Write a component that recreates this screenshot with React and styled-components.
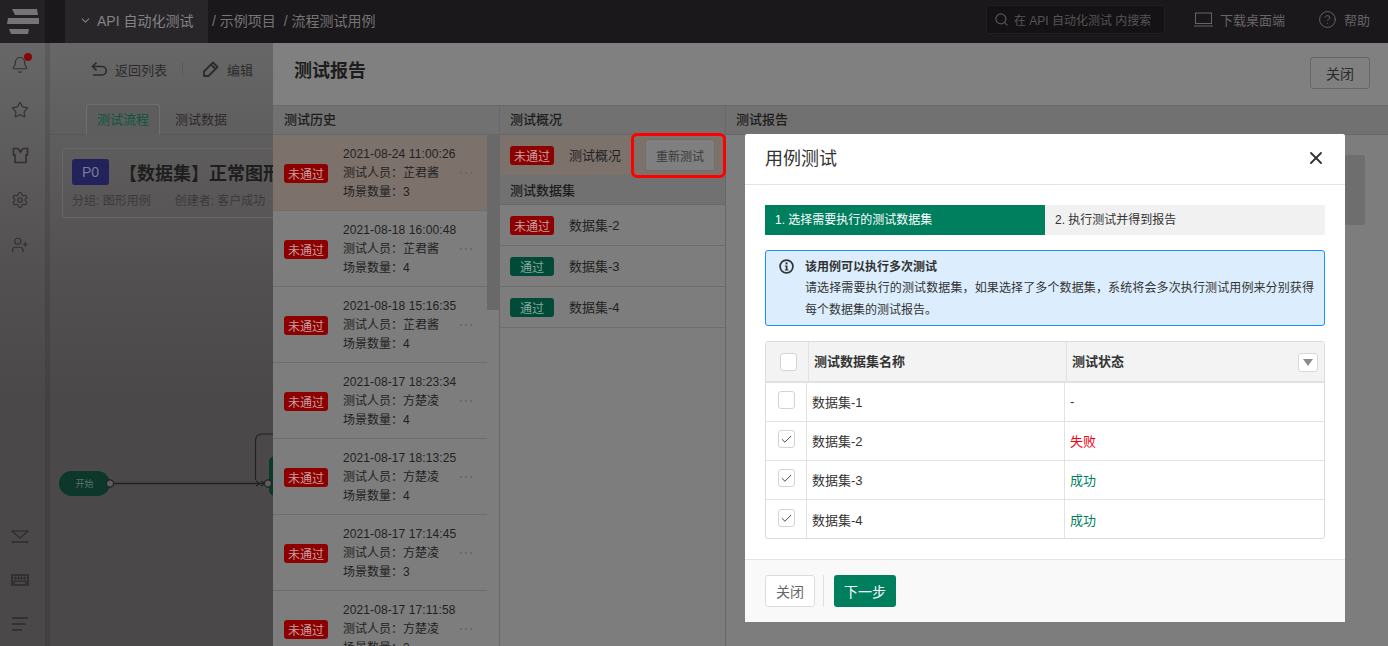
import React from "react";
import styled, { createGlobalStyle } from "styled-components";
import { Bell, Star, Settings, UserPlus, Search, CircleHelp, ChevronDown, Check, X } from "lucide-react";

const Global = createGlobalStyle`
  html, body { margin: 0; padding: 0; height: 100%; overflow: hidden; background: #4b4949; }
  #root { height: 100%; }
  * { box-sizing: border-box; }
  body { font-family: "Liberation Sans", "Noto Sans CJK SC", sans-serif; font-size: 12px; color: #262626; }
`;

const Page = styled.div`
  position: relative;
  width: 1388px;
  height: 646px;
  overflow: hidden;
  display: flex;
  flex-direction: column;
`;

/* ---------- top bar ---------- */
const TopBar = styled.header`
  height: 43px;
  flex: none;
  display: flex;
  align-items: stretch;
  background: #1a181a;
  color: #7e7c7e;
  font-size: 14px;
`;
const LogoCell = styled.div`
  width: 45px;
  display: flex;
  align-items: center;
  justify-content: center;
  background: #232123;
  margin-right: 20px;
`;
const Crumb = styled.div`
  width: 143px;
  display: flex;
  align-items: center;
  gap: 5px;
  padding-left: 14px;
  padding-bottom: 3px;
  background: #282628;
  color: #858385;
`;
const Path = styled.div`
  flex: 1;
  display: flex;
  align-items: center;
  gap: 8px;
  padding-left: 4px;
  padding-bottom: 3px;
  color: #767476;
`;
const SearchBox = styled.div`
  width: 179px;
  height: 29px;
  align-self: center;
  margin-top: -5px;
  display: flex;
  align-items: center;
  gap: 5px;
  padding-left: 7px;
  background: #141214;
  border: 1px solid #211f21;
  border-radius: 3px;
  color: #565456;
  font-size: 12px;
`;
const TopLink = styled.div`
  display: flex;
  align-items: center;
  gap: 7px;
  margin-left: ${(p) => p.$left}px;
  margin-right: ${(p) => p.$right || 0}px;
  margin-top: -4px;
  font-size: 13px;
  color: #666466;
`;

/* ---------- sidebar ---------- */
const Body = styled.div`
  flex: 1;
  display: flex;
  min-height: 0;
  background: linear-gradient(180deg, #686767 0, #525050 230px, #4a4848 360px);
`;
const SideBar = styled.aside`
  width: 50px;
  flex: none;
  display: flex;
  flex-direction: column;
  align-items: center;
  padding: 0 5px 0 0;
  border-right: 5px solid rgba(0, 0, 0, 0.1);
  color: #333131;
`;
const SideGroup = styled.div`
  display: flex;
  flex-direction: column;
  align-items: center;
  margin-top: ${(p) => p.$top}px;
  gap: ${(p) => p.$gap}px;
`;
const SideIcon = styled.div`
  position: relative;
  width: 22px;
  height: 22px;
  display: flex;
  align-items: center;
  justify-content: center;
`;
const Dot = styled.span`
  position: absolute;
  top: -1px;
  right: -1px;
  width: 8px;
  height: 8px;
  border-radius: 50%;
  background: #850808;
`;

/* ---------- main (dimmed, behind the drawer) ---------- */
const Main = styled.main`
  position: relative;
  flex: 1;
  min-width: 0;
  padding-top: 14px;
`;
const Toolbar = styled.div`
  height: 24px;
  padding-left: 41px;
  display: flex;
  align-items: center;
  color: #2c2b2b;
  font-size: 13px;
`;
const ToolItem = styled.span`
  display: flex;
  align-items: center;
  gap: 8px;
`;
const ToolDivider = styled.span`
  width: 1px;
  height: 14px;
  background: #5a5959;
  margin: 0 20px 0 15px;
`;
const Tabs = styled.div`
  height: 31px;
  margin-top: 23px;
  padding-left: 36px;
  display: flex;
  border-bottom: 1px solid #595757;
  font-size: 13px;
`;
const Tab = styled.div`
  width: ${(p) => (p.$active ? 74 : 82)}px;
  height: 31px;
  display: flex;
  align-items: center;
  justify-content: center;
  padding-bottom: 2px;
  color: ${(p) => (p.$active ? "#0d5540" : "#2b2a2a")};
  ${(p) => p.$active && "background: #5e5d5d; border: 1px solid #706e6e; border-bottom-color: #5e5d5d; border-radius: 3px 3px 0 0;"}
`;
const InfoCard = styled.div`
  margin: 13px 0 0 12px;
  width: 220px;
  height: 70px;
  padding: 10px 9px;
  border: 1px solid #686666;
  border-radius: 3px;
  white-space: nowrap;
  overflow: hidden;
`;
const TitleRow = styled.div`
  display: flex;
  align-items: center;
  gap: 10px;
`;
const Priority = styled.span`
  width: 37px;
  height: 26px;
  flex: none;
  display: flex;
  align-items: center;
  justify-content: center;
  background: #23225a;
  border-radius: 3px;
  color: #7b7a9c;
  font-size: 14px;
`;
const CaseTitle = styled.span`
  font-size: 18px;
  font-weight: 700;
  color: #1f1e1e;
`;
const Meta = styled.div`
  margin-top: 6px;
  display: flex;
  gap: 24px;
  color: #3b3a3a;
`;
const FlowCanvas = styled.div`
  position: absolute;
  inset: 0;
  pointer-events: none;
`;
const StartNode = styled.div`
  position: absolute;
  left: 9px;
  top: 428px;
  width: 51px;
  height: 25px;
  border-radius: 13px;
  display: flex;
  align-items: center;
  justify-content: center;
  background: #0c372a;
  color: #5a7369;
  font-size: 9px;
`;
const StepNode = styled.div`
  position: absolute;
  left: 219px;
  top: 413px;
  width: 30px;
  height: 40px;
  border-radius: 6px;
  background: #0c372a;
`;
const Edges = styled.svg`
  position: absolute;
  left: 0;
  top: 0;
  overflow: visible;
`;

/* ---------- drawer ---------- */
const Drawer = styled.section`
  position: absolute;
  left: 273px;
  right: 0;
  top: 43px;
  bottom: 0;
  display: flex;
  flex-direction: column;
  background: #808080;
`;
const DrawerHead = styled.div`
  height: 62px;
  flex: none;
  padding: 0 18px 0 21px;
  display: flex;
  align-items: center;
  justify-content: space-between;
`;
const DrawerTitle = styled.h2`
  margin: 0;
  margin-top: -11px;
  font-size: 18px;
  font-weight: 700;
  color: #1d1d1d;
`;
const GhostButton = styled.button`
  width: 60px;
  height: 32px;
  margin-top: -2px;
  background: transparent;
  border: 1px solid #666;
  border-radius: 3px;
  font: inherit;
  font-size: 14px;
  color: #2a2a2a;
`;
const Columns = styled.div`
  flex: 1;
  min-height: 0;
  display: grid;
  grid-template-columns: 227px 226px 1fr;
  border-top: 1px solid #696969;
`;
const Column = styled.div`
  position: relative;
  min-width: 0;
  overflow: ${(p) => (p.$open ? "visible" : "hidden")};
  z-index: ${(p) => (p.$open ? 1 : 0)};
  background: #7d7d7d;
  ${(p) => p.$divided && "border-right: 1px solid #686868;"}
`;
const ColHead = styled.div`
  height: ${(p) => p.$h || 29}px;
  display: flex;
  align-items: center;
  padding: 0 0 ${(p) => p.$pb ?? 4}px ${(p) => p.$pl || 10}px;
  background: #717171;
  border-bottom: 1px solid #686868;
  font-size: 13px;
  font-weight: 500;
  color: #1c1c1c;
`;
const History = styled.div`
  position: relative;
  padding-right: 12px;
`;
const ScrollThumb = styled.div`
  position: absolute;
  right: 0;
  top: 0;
  width: 12px;
  height: 175px;
  background: #696969;
`;
const HistoryRow = styled.div`
  position: relative;
  height: 76px;
  display: flex;
  align-items: center;
  padding: 2px 0 0 11px;
  background: ${(p) => (p.$active ? "#7d716c" : "transparent")};
  border-bottom: 1px solid #6e6e6e;
`;
const Badge = styled.span`
  width: 44px;
  height: 19px;
  flex: none;
  display: flex;
  align-items: center;
  justify-content: center;
  border-radius: 3px;
  background: ${(p) => (p.$pass ? "#004a37" : "#8c0000")};
  color: ${(p) => (p.$pass ? "#8aab9f" : "#c7a0a0")};
  font-size: 12px;
`;
const HistoryText = styled.div`
  margin-left: 15px;
  line-height: 19px;
  color: #222;
  white-space: nowrap;
`;
const TimeLine = styled.div`
  letter-spacing: 0.1px;
`;
const More = styled.span`
  position: absolute;
  left: 187px;
  top: 37px;
  display: flex;
  gap: 3px;
`;
const MoreDot = styled.i`
  width: 2px;
  height: 2px;
  background: #6a6a6a;
`;
const DataRow = styled.div`
  position: relative;
  height: ${(p) => p.$h || 41}px;
  display: flex;
  align-items: center;
  padding-left: 10px;
  background: ${(p) => (p.$active ? "#7d716c" : "transparent")};
  border-bottom: ${(p) => (p.$active ? "none" : "1px solid #6e6e6e")};
`;
const DataName = styled.span`
  margin-left: 15px;
  padding-bottom: 2px;
  color: #222;
  font-size: 13px;
`;
const RetestButton = styled.button`
  position: absolute;
  left: 145px;
  top: 4px;
  width: 70px;
  height: 32px;
  background: #7f7f7f;
  border: 1px solid #6e6e6e;
  border-radius: 3px;
  font: inherit;
  font-size: 12px;
  color: #3a3a3a;
`;
const RedMark = styled.div`
  position: absolute;
  left: 131px;
  top: -2px;
  width: 95px;
  height: 45px;
  border: 3px solid #f00;
  border-radius: 6px;
`;
const ReportGhost = styled.div`
  position: absolute;
  right: 23px;
  top: 49px;
  width: 60px;
  height: 70px;
  border-radius: 3px;
  background: #6e6e6e;
`;

/* ---------- modal ---------- */
const Modal = styled.div`
  position: absolute;
  z-index: 2;
  left: 745px;
  top: 134px;
  width: 600px;
  height: 488px;
  display: flex;
  flex-direction: column;
  background: #fff;
  border-radius: 2px;
`;
const ModalHead = styled.div`
  height: 51px;
  flex: none;
  padding: 0 20px;
  display: flex;
  align-items: center;
  justify-content: space-between;
  border-bottom: 1px solid #e3e3e3;
  color: #333;
`;
const ModalTitle = styled.h3`
  margin: 0 0 5px;
  font-size: 18px;
  font-weight: 400;
  color: #333;
`;
const CloseX = styled.span`
  display: flex;
  margin: 0 -1px 2px 0;
  color: #333;
`;
const ModalBody = styled.div`
  flex: 1;
  padding: 20px 20px 0;
  display: flex;
  flex-direction: column;
`;
const Steps = styled.div`
  height: 30px;
  display: flex;
  background: #f1f1f1;
  font-size: 12px;
`;
const Step = styled.div`
  width: ${(p) => (p.$active ? "280px" : "auto")};
  flex: ${(p) => (p.$active ? "none" : 1)};
  display: flex;
  align-items: center;
  padding: 0 0 4px 10px;
  background: ${(p) => (p.$active ? "#007f5f" : "transparent")};
  color: ${(p) => (p.$active ? "#fff" : "#333")};
`;
const Alert = styled.div`
  margin-top: 15px;
  height: 76px;
  padding: 7px 10px 0 13px;
  display: flex;
  gap: 11px;
  background: #dceefd;
  border: 1px solid #1890ff;
  border-radius: 3px;
  color: #333;
`;
const AlertIcon = styled.svg`
  flex: none;
  margin-top: 1px;
`;
const AlertContent = styled.div`
  flex: 1;
  min-width: 0;
`;
const AlertTitle = styled.div`
  font-weight: 700;
  line-height: 18px;
  color: #333;
`;
const AlertLine = styled.div`
  line-height: 22px;
  margin-top: ${(p) => (p.$first ? 1 : 0)}px;
  text-align-last: ${(p) => (p.$first ? "justify" : "left")};
`;
const Table = styled.div`
  margin-top: 15px;
  height: 198px;
  border: 1px solid #dcdcdc;
  border-radius: 3px;
  overflow: hidden;
`;
const HeadRow = styled.div`
  height: 41px;
  display: grid;
  grid-template-columns: 43px 258px 1fr;
  background: #f3f3f3;
  border-bottom: 2px solid #e2e2e2;
  font-weight: 700;
  color: #333;
`;
const BodyRow = styled.div`
  height: ${(p) => p.$h || 39}px;
  display: grid;
  grid-template-columns: 41px 258px 1fr;
  border-bottom: ${(p) => (p.$last ? "none" : "1px solid #e3e3e3")};
`;
const Cell = styled.div`
  position: relative;
  display: flex;
  align-items: center;
  justify-content: ${(p) => (p.$center ? "center" : "flex-start")};
  padding: 0 0 2px ${(p) => (p.$center ? 0 : 5)}px;
  color: ${(p) => p.$color || "#333"};
  font-size: 13px;
  ${(p) => !p.$end && "border-right: 1px solid #e3e3e3;"}
`;
const HeadCell = styled(Cell)`
  color: #333;
  border-right-color: #e2e2e2;
`;
const Box = styled.span`
  width: 17px;
  height: 18px;
  display: flex;
  align-items: center;
  justify-content: center;
  background: #fff;
  border: 1px solid #d4d4d4;
  border-radius: 3px;
  color: #2e2e2e;
  margin-top: ${(p) => p.$top || 0}px;
  margin-left: ${(p) => p.$left || 0}px;
`;
const FilterButton = styled.span`
  position: absolute;
  right: 6px;
  top: 11px;
  width: 20px;
  height: 19px;
  display: flex;
  align-items: center;
  justify-content: center;
  background: #fff;
  border: 1px solid #d9d9d9;
  border-radius: 3px;
`;
const Caret = styled.span`
  width: 0;
  height: 0;
  border-left: 5px solid transparent;
  border-right: 5px solid transparent;
  border-top: 7px solid #8c8c8c;
`;
const ModalFoot = styled.div`
  height: 63px;
  flex: none;
  display: flex;
  align-items: center;
  padding: 0 20px;
  background: #f9f9f9;
  border-top: 1px solid #e4e4e4;
`;
const FootClose = styled.button`
  width: 50px;
  height: 32px;
  background: #fff;
  border: 1px solid #dcdcdc;
  border-radius: 3px;
  font: inherit;
  font-size: 14px;
  color: #666;
`;
const FootDivider = styled.span`
  width: 1px;
  height: 32px;
  margin: 0 10px 0 8px;
  background: #e0e0e0;
`;
const FootNext = styled.button`
  width: 62px;
  height: 32px;
  background: #007f5f;
  border: none;
  border-radius: 3px;
  font: inherit;
  font-size: 14px;
  color: #fff;
`;

const Logo = () => (
  <svg width="32" height="25" viewBox="0 0 32 25" fill="#767476">
    <path d="M5 0h25l1 6H8z" />
    <path d="M1 9h31v6H0z" />
    <path d="M2 20h20l-1 5H4z" />
  </svg>
);
const Shirt = () => (
  <svg width="17" height="17" viewBox="0 0 17 17" fill="none" stroke="currentColor" strokeWidth="1.7" strokeLinejoin="miter">
    <path d="M1.500 1.500H6L8.500 5 11 1.500h4.500V8H14v7.500H3V8H1.500z" />
  </svg>
);
const Collapse = () => (
  <svg width="18" height="13" viewBox="0 0 18 13" fill="none" stroke="currentColor" strokeWidth="1.6">
    <path d="M1 1h16l-8 7z" />
    <path d="M0.500 12h17" strokeWidth="1.800" />
  </svg>
);
const Keys = () => (
  <svg width="18" height="12" viewBox="0 0 18 12" fill="currentColor">
    <path fillRule="evenodd" d="M0 0h18v12H0zM2 2v1.500h2V2zm3 0v1.500h2V2zm3 0v1.500h2V2zm3 0v1.500h2V2zm3 0v1.500h2V2zM2 5v1.500h2V5zm3 0v1.500h2V5zm3 0v1.500h2V5zm3 0v1.500h2V5zm3 0v1.500h2V5zM4 8v2h10V8z" />
  </svg>
);
const Lines = () => (
  <svg width="16" height="14" viewBox="0 0 16 14" fill="currentColor">
    <rect width="16" height="2" />
    <rect y="6" width="13.500" height="2" />
    <rect y="12" width="10" height="2" />
  </svg>
);
const Back = () => (
  <svg width="16" height="16" viewBox="0 0 16 16" fill="none" stroke="currentColor" strokeWidth="1.700">
    <path d="M5.500 1.500 1.500 5.500l4 4M1.500 5.500h9.500a4 4 0 0 1 0 8.500H2" />
  </svg>
);
const Pen = () => (
  <svg width="16" height="16" viewBox="0 0 16 16" fill="none" stroke="currentColor" strokeWidth="1.800" strokeLinejoin="round">
    <path d="M1 15v-4.500L10 1.500 14.500 6l-9 9zM8 3.500 12.500 8" />
  </svg>
);
const LaptopIcon = () => (
  <svg width="19" height="15" viewBox="0 0 19 15" fill="none" stroke="currentColor" strokeWidth="1">
    <rect x="1.500" y="1" width="16" height="10.500" />
    <path d="M0 14h19" />
  </svg>
);
const InfoIcon = () => (
  <AlertIcon width="15" height="15" viewBox="0 0 15 15" fill="none">
    <circle cx="7.500" cy="7.500" r="6.400" stroke="#333" strokeWidth="1.700" />
    <rect x="6.500" y="3.400" width="2" height="2" fill="#333" />
    <path d="M5.800 6.400h2.700v4h1v1.100H5.800v-1.100h1v-2.900h-1z" fill="#333" />
  </AlertIcon>
);

const history = [
  ["2021-08-24 11:00:26", "芷君酱", 3],
  ["2021-08-18 16:00:48", "芷君酱", 4],
  ["2021-08-18 15:16:35", "芷君酱", 4],
  ["2021-08-17 18:23:34", "方楚凌", 4],
  ["2021-08-17 18:13:25", "方楚凌", 4],
  ["2021-08-17 17:14:45", "方楚凌", 3],
  ["2021-08-17 17:11:58", "方楚凌", 3],
];
const dataRows = [
  ["数据集-1", "-", "#333", false],
  ["数据集-2", "失败", "#f5000f", true],
  ["数据集-3", "成功", "#007f5f", true],
  ["数据集-4", "成功", "#007f5f", true],
];

export default function App() {
  return (
    <Page>
      <Global />
      <TopBar>
        <LogoCell><Logo /></LogoCell>
        <Crumb><ChevronDown size={13} />API 自动化测试</Crumb>
        <Path><span>/ 示例项目</span><span>/ 流程测试用例</span></Path>
        <SearchBox><Search size={15} />在 API 自动化测试 内搜索</SearchBox>
        <TopLink $left={29}><LaptopIcon />下载桌面端</TopLink>
        <TopLink $left={33} $right={18}><CircleHelp size={19} strokeWidth={1.2} />帮助</TopLink>
      </TopBar>
      <Body>
        <SideBar>
          <SideGroup $top={11} $gap={23}>
            <SideIcon><Bell size={18} strokeWidth={1.6} /><Dot /></SideIcon>
            <SideIcon><Star size={18} strokeWidth={1.6} /></SideIcon>
            <SideIcon><Shirt /></SideIcon>
            <SideIcon><Settings size={18} strokeWidth={1.6} /></SideIcon>
            <SideIcon><UserPlus size={18} strokeWidth={1.6} /></SideIcon>
          </SideGroup>
          <SideGroup $top={269} $gap={22}>
            <SideIcon><Collapse /></SideIcon>
            <SideIcon><Keys /></SideIcon>
            <SideIcon><Lines /></SideIcon>
          </SideGroup>
        </SideBar>
        <Main>
          <Toolbar>
            <ToolItem><Back />返回列表</ToolItem>
            <ToolDivider />
            <ToolItem><Pen />编辑</ToolItem>
          </Toolbar>
          <Tabs>
            <Tab $active>测试流程</Tab>
            <Tab>测试数据</Tab>
          </Tabs>
          <InfoCard>
            <TitleRow><Priority>P0</Priority><CaseTitle>【数据集】正常图形</CaseTitle></TitleRow>
            <Meta><span>分组: 图形用例</span><span>创建者: 客户成功</span></Meta>
          </InfoCard>
          <FlowCanvas>
            <StartNode>开始</StartNode>
            <StepNode />
            <Edges width="300" height="500" fill="none" stroke="#232222" strokeWidth="1.200">
              <path d="M64 440.500H216" strokeWidth="1.400" />
              <path d="M205.500 437V398q0-7 7-7h24" />
              <path d="M206 438l4 2.500-4 2.500M211 438l4 2.500-4 2.500" />
              <circle cx="60" cy="440.500" r="3.600" fill="#5e5c5c" />
              <circle cx="218" cy="440.500" r="3.600" fill="#5e5c5c" />
            </Edges>
          </FlowCanvas>
        </Main>
      </Body>

      <Drawer>
        <DrawerHead>
          <DrawerTitle>测试报告</DrawerTitle>
          <GhostButton>关闭</GhostButton>
        </DrawerHead>
        <Columns>
          <Column $divided>
            <ColHead $pl={11}>测试历史</ColHead>
            <History>
              <ScrollThumb />
              {history.map(([time, who, n], i) => (
                <HistoryRow key={time} $active={i === 0}>
                  <Badge>未通过</Badge>
                  <HistoryText>
                    <TimeLine>{time}</TimeLine>
                    <div>测试人员：{who}</div>
                    <div>场景数量：{n}</div>
                  </HistoryText>
                  <More><MoreDot /><MoreDot /><MoreDot /></More>
                </HistoryRow>
              ))}
            </History>
          </Column>
          <Column $divided $open>
            <ColHead>测试概况</ColHead>
            <DataRow $active $h={40}>
              <Badge>未通过</Badge>
              <DataName>测试概况</DataName>
              <RetestButton>重新测试</RetestButton>
              <RedMark />
            </DataRow>
            <ColHead $h={30} $pb={0}>测试数据集</ColHead>
            <DataRow><Badge>未通过</Badge><DataName>数据集-2</DataName></DataRow>
            <DataRow><Badge $pass>通过</Badge><DataName>数据集-3</DataName></DataRow>
            <DataRow><Badge $pass>通过</Badge><DataName>数据集-4</DataName></DataRow>
          </Column>
          <Column>
            <ColHead>测试报告</ColHead>
            <ReportGhost />
          </Column>
        </Columns>
      </Drawer>

      <Modal>
        <ModalHead>
          <ModalTitle>用例测试</ModalTitle>
          <CloseX><X size={20} strokeWidth={2.2} /></CloseX>
        </ModalHead>
        <ModalBody>
          <Steps>
            <Step $active>1. 选择需要执行的测试数据集</Step>
            <Step>2. 执行测试并得到报告</Step>
          </Steps>
          <Alert>
            <InfoIcon />
            <AlertContent>
              <AlertTitle>该用例可以执行多次测试</AlertTitle>
              <AlertLine $first>请选择需要执行的测试数据集，如果选择了多个数据集，系统将会多次执行测试用例来分别获得</AlertLine>
              <AlertLine>每个数据集的测试报告。</AlertLine>
            </AlertContent>
          </Alert>
          <Table>
            <HeadRow>
              <HeadCell $center><Box $left={2} $top={2} /></HeadCell>
              <HeadCell>测试数据集名称</HeadCell>
              <HeadCell $end>测试状态<FilterButton><Caret /></FilterButton></HeadCell>
            </HeadRow>
            {dataRows.map(([name, state, color, on], i) => (
              <BodyRow key={name} $last={i === 3} $h={i === 3 ? 40 : 39}>
                <Cell $center><Box $top={-2}>{on && <Check size={13} strokeWidth={1.6} />}</Box></Cell>
                <Cell>{name}</Cell>
                <Cell $end $color={color}>{state}</Cell>
              </BodyRow>
            ))}
          </Table>
        </ModalBody>
        <ModalFoot>
          <FootClose>关闭</FootClose>
          <FootDivider />
          <FootNext>下一步</FootNext>
        </ModalFoot>
      </Modal>
    </Page>
  );
}
